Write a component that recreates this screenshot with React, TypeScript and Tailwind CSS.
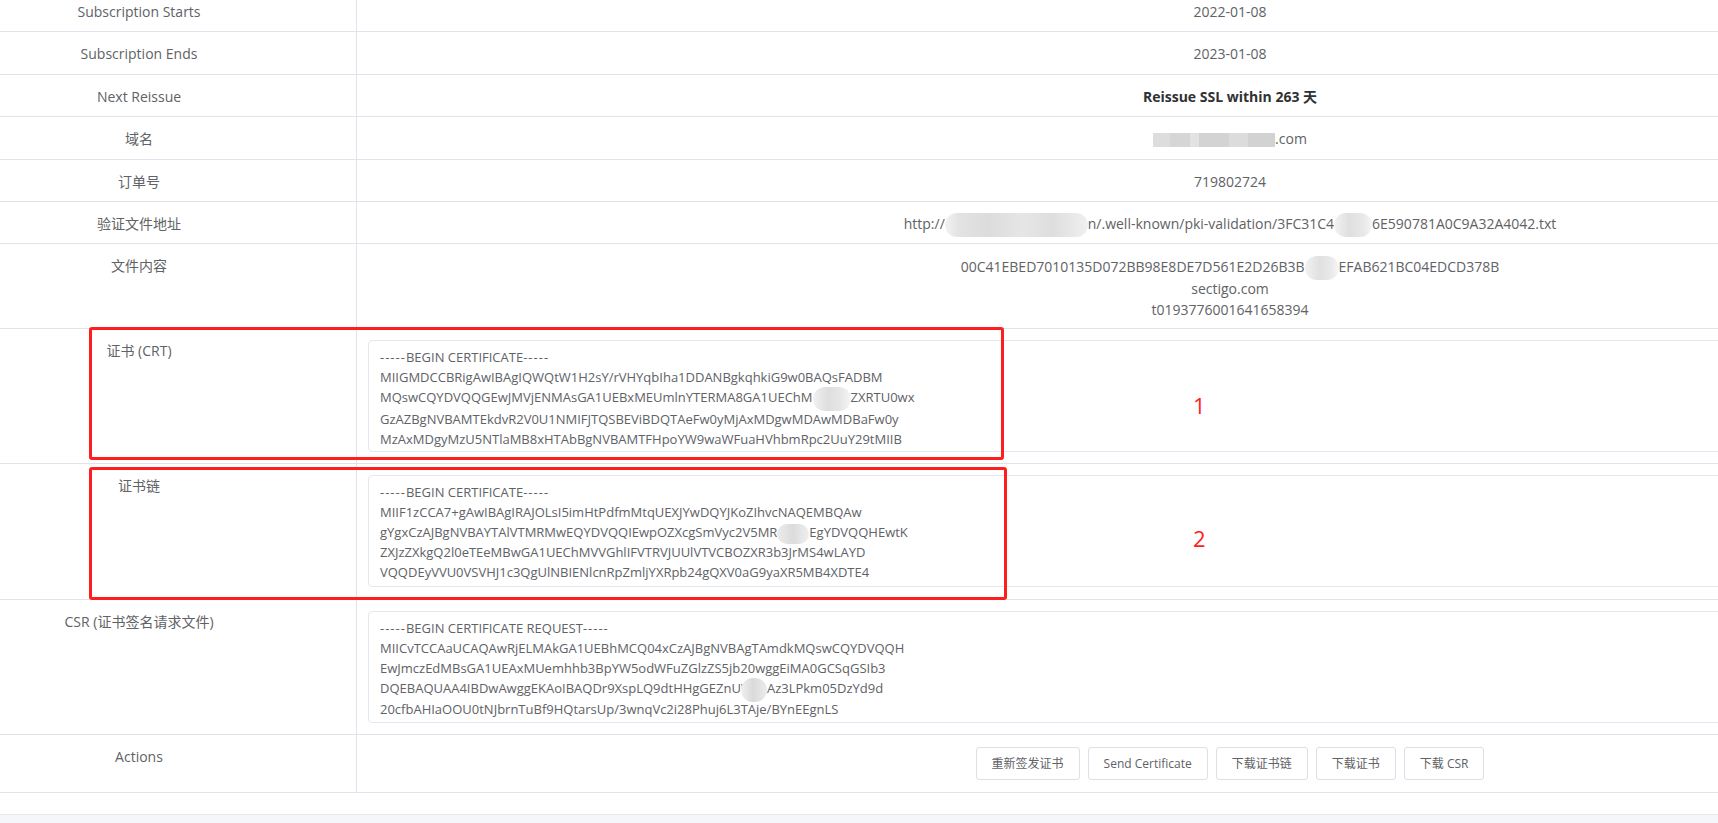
import React from 'react';

// mosaic used where the original screenshot was blurred out
const Blur: React.FC<{ className: string }> = ({ className }) => (
  <span className={`relative inline-block align-middle ${className}`} />
);

const Dashes = () => <span className="tracking-[1px]">-----</span>;

const Label: React.FC<{ children: React.ReactNode }> = ({ children }) => (
  <div className="w-[357px] shrink-0 border-r border-[#dfe3ec] pr-[78px] pt-[11px] text-center leading-[22px]">
    {children}
  </div>
);

const CertBox: React.FC<{ lines: React.ReactNode[] }> = ({ lines }) => (
  <div className="h-[112px] overflow-hidden rounded-[4px] border border-[#e4e7ed] pl-[11px] pt-[6px] text-left text-[13px] leading-[20px] whitespace-nowrap">
    {lines.map((line, i) => (
      <div key={i}>{line}</div>
    ))}
  </div>
);

const simpleRows = [
  { label: 'Subscription Starts', value: '2022-01-08', h: 'h-[42px]' },
  { label: 'Subscription Ends', value: '2023-01-08', h: 'h-[43px]' },
];

const crtLines = [
  <>
    <Dashes />BEGIN CERTIFICATE<Dashes />
  </>,
  'MIIGMDCCBRigAwIBAgIQWQtW1H2sY/rVHYqbIha1DDANBgkqhkiG9w0BAQsFADBM',
  <>
    MQswCQYDVQQGEwJMVjENMAsGA1UEBxMEUmlnYTERMA8GA1UEChM
    <Blur className="-my-[2px] h-[24px] w-[38px] rounded-full bg-[linear-gradient(90deg,#f1f1f1,#dedede_40%,#e6e6e6_70%,#f4f4f4)]" />
    <span className="relative">ZXRTU0wx</span>
  </>,
  'GzAZBgNVBAMTEkdvR2V0U1NMIFJTQSBEViBDQTAeFw0yMjAxMDgwMDAwMDBaFw0y',
  'MzAxMDgyMzU5NTlaMB8xHTAbBgNVBAMTFHpoYW9waWFuaHVhbmRpc2UuY29tMIIB',
];

const chainLines = [
  <>
    <Dashes />BEGIN CERTIFICATE<Dashes />
  </>,
  'MIIF1zCCA7+gAwIBAgIRAJOLsI5imHtPdfmMtqUEXJYwDQYJKoZIhvcNAQEMBQAw',
  <>
    gYgxCzAJBgNVBAYTAlVTMRMwEQYDVQQIEwpOZXcgSmVyc2V5MR
    <Blur className="-my-[2px] h-[20px] w-[32px] rounded-full bg-[linear-gradient(90deg,#ececec,#dcdcdc_50%,#efefef)]" />
    <span className="relative">EgYDVQQHEwtK</span>
  </>,
  'ZXJzZXkgQ2l0eTEeMBwGA1UEChMVVGhlIFVTRVJUUlVTVCBOZXR3b3JrMS4wLAYD',
  'VQQDEyVVU0VSVHJ1c3QgUlNBIENlcnRpZmljYXRpb24gQXV0aG9yaXR5MB4XDTE4',
];

const csrLines = [
  <>
    <Dashes />BEGIN CERTIFICATE REQUEST<Dashes />
  </>,
  'MIICvTCCAaUCAQAwRjELMAkGA1UEBhMCQ04xCzAJBgNVBAgTAmdkMQswCQYDVQQH',
  'EwJmczEdMBsGA1UEAxMUemhhb3BpYW5odWFuZGlzZS5jb20wggEiMA0GCSqGSIb3',
  <>
    DQEBAQUAA4IBDwAwggEKAoIBAQDr9XspLQ9dtHHgGEZnUW
    <Blur className="-my-[3px] -ml-[12px] h-[24px] w-[26px] rounded-full bg-[linear-gradient(90deg,#f0f0f0,#dadada_45%,#ebebeb)]" />
    <span className="relative">Az3LPkm05DzYd9d</span>
  </>,
  '20cfbAHIaOOU0tNJbrnTuBf9HQtarsUp/3wnqVc2i28Phuj6L3TAje/BYnEEgnLS',
];

const buttons = ['重新签发证书', 'Send Certificate', '下载证书链', '下载证书', '下载 CSR'];

export default function App() {
  return (
    <div className="relative h-[823px] w-full overflow-hidden bg-white font-['Open_Sans','Noto_Sans_CJK_SC',sans-serif] text-[14px] text-[#606266]">
      <div className="-mt-[10px] w-[2103px]">
        {simpleRows.map((r) => (
          <div key={r.label} className={`flex border-b border-[#dfe3ec] ${r.h}`}>
            <Label>{r.label}</Label>
            <div className="flex-1 pt-[11px] text-center leading-[22px]">{r.value}</div>
          </div>
        ))}

        <div className="flex h-[42px] border-b border-[#dfe3ec]">
          <Label>Next Reissue</Label>
          <div className="flex-1 pt-[11px] text-center font-bold leading-[22px] text-[#303133]">
            Reissue SSL within 263 天
          </div>
        </div>

        <div className="flex h-[43px] border-b border-[#dfe3ec]">
          <Label>域名</Label>
          <div className="flex-1 pt-[11px] text-center leading-[22px]">
            <Blur className="h-[14px] w-[122px] bg-[linear-gradient(90deg,#dddddd_0%,#dddddd_14%,#d6d6d6_14%,#d6d6d6_30%,#e2e2e2_30%,#e2e2e2_38%,#d3d3d3_38%,#d3d3d3_62%,#dcdcdc_62%,#dcdcdc_78%,#d2d2d2_78%,#d2d2d2_100%)]" />
            .com
          </div>
        </div>

        <div className="flex h-[42px] border-b border-[#dfe3ec]">
          <Label>订单号</Label>
          <div className="flex-1 pt-[11px] text-center leading-[22px]">719802724</div>
        </div>

        <div className="flex h-[42px] border-b border-[#dfe3ec]">
          <Label>验证文件地址</Label>
          <div className="flex-1 pt-[11px] text-center leading-[22px]">
            http://
            <Blur className="-my-[2px] h-[24px] w-[143px] rounded-full bg-[linear-gradient(90deg,#f2f2f2_0%,#e3e3e3_10%,#dcdcdc_30%,#e6e6e6_55%,#dedede_75%,#f0f0f0_100%)]" />
            n/.well-known/pki-validation/3FC31C4
            <Blur className="-my-[2px] h-[24px] w-[38px] rounded-full bg-[linear-gradient(90deg,#f3f3f3,#dfdfdf_40%,#e9e9e9_80%,#f5f5f5)]" />
            6E590781A0C9A32A4042.txt
          </div>
        </div>

        <div className="flex h-[85px] border-b border-[#dfe3ec]">
          <Label>文件内容</Label>
          <div className="flex-1 pt-[12px] text-center leading-[21px]">
            <div>
              00C41EBED7010135D072BB98E8DE7D561E2D26B3B
              <Blur className="-my-[2px] h-[24px] w-[34px] rounded-full bg-[linear-gradient(90deg,#f2f2f2,#e0e0e0_45%,#ebebeb_80%,#f6f6f6)]" />
              EFAB621BC04EDCD378B
            </div>
            <div>sectigo.com</div>
            <div>t0193776001641658394</div>
          </div>
        </div>

        <div className="flex h-[135px] border-b border-[#dfe3ec]">
          <Label>证书 (CRT)</Label>
          <div className="min-w-0 flex-1 px-[11px] pt-[11px]">
            <CertBox lines={crtLines} />
          </div>
        </div>

        <div className="flex h-[136px] border-b border-[#dfe3ec]">
          <Label>证书链</Label>
          <div className="min-w-0 flex-1 px-[11px] pt-[11px]">
            <CertBox lines={chainLines} />
          </div>
        </div>

        <div className="flex h-[135px] border-b border-[#dfe3ec]">
          <Label>CSR (证书签名请求文件)</Label>
          <div className="min-w-0 flex-1 px-[11px] pt-[11px]">
            <CertBox lines={csrLines} />
          </div>
        </div>

        <div className="flex h-[58px] border-b border-[#dfe3ec]">
          <Label>Actions</Label>
          <div className="flex flex-1 justify-center gap-[8px] pt-[12px]">
            {buttons.map((b) => (
              <button
                key={b}
                className="h-[33px] rounded-[3px] border border-[#dcdfe6] bg-white px-[15px] text-[12px] leading-none text-[#606266]"
              >
                {b}
              </button>
            ))}
          </div>
        </div>
      </div>

      {/* grey page footer area */}
      <div className="mt-[21px] h-[40px] border-t border-[#e6e8ee] bg-[#f5f6f9]" />

      {/* red annotations drawn over the page */}
      <div className="pointer-events-none absolute left-[89px] top-[327px] h-[133px] w-[915px] rounded-[3px] border-[3px] border-[#ff1e1e]" />
      <div className="pointer-events-none absolute left-[89px] top-[467px] h-[133px] w-[918px] rounded-[3px] border-[3px] border-[#ff1e1e]" />
      <div className="absolute left-[1193px] top-[391px] text-[22px] leading-[28px] text-[#ff1e1e]">1</div>
      <div className="absolute left-[1193px] top-[524px] text-[22px] leading-[28px] text-[#ff1e1e]">2</div>
    </div>
  );
}
